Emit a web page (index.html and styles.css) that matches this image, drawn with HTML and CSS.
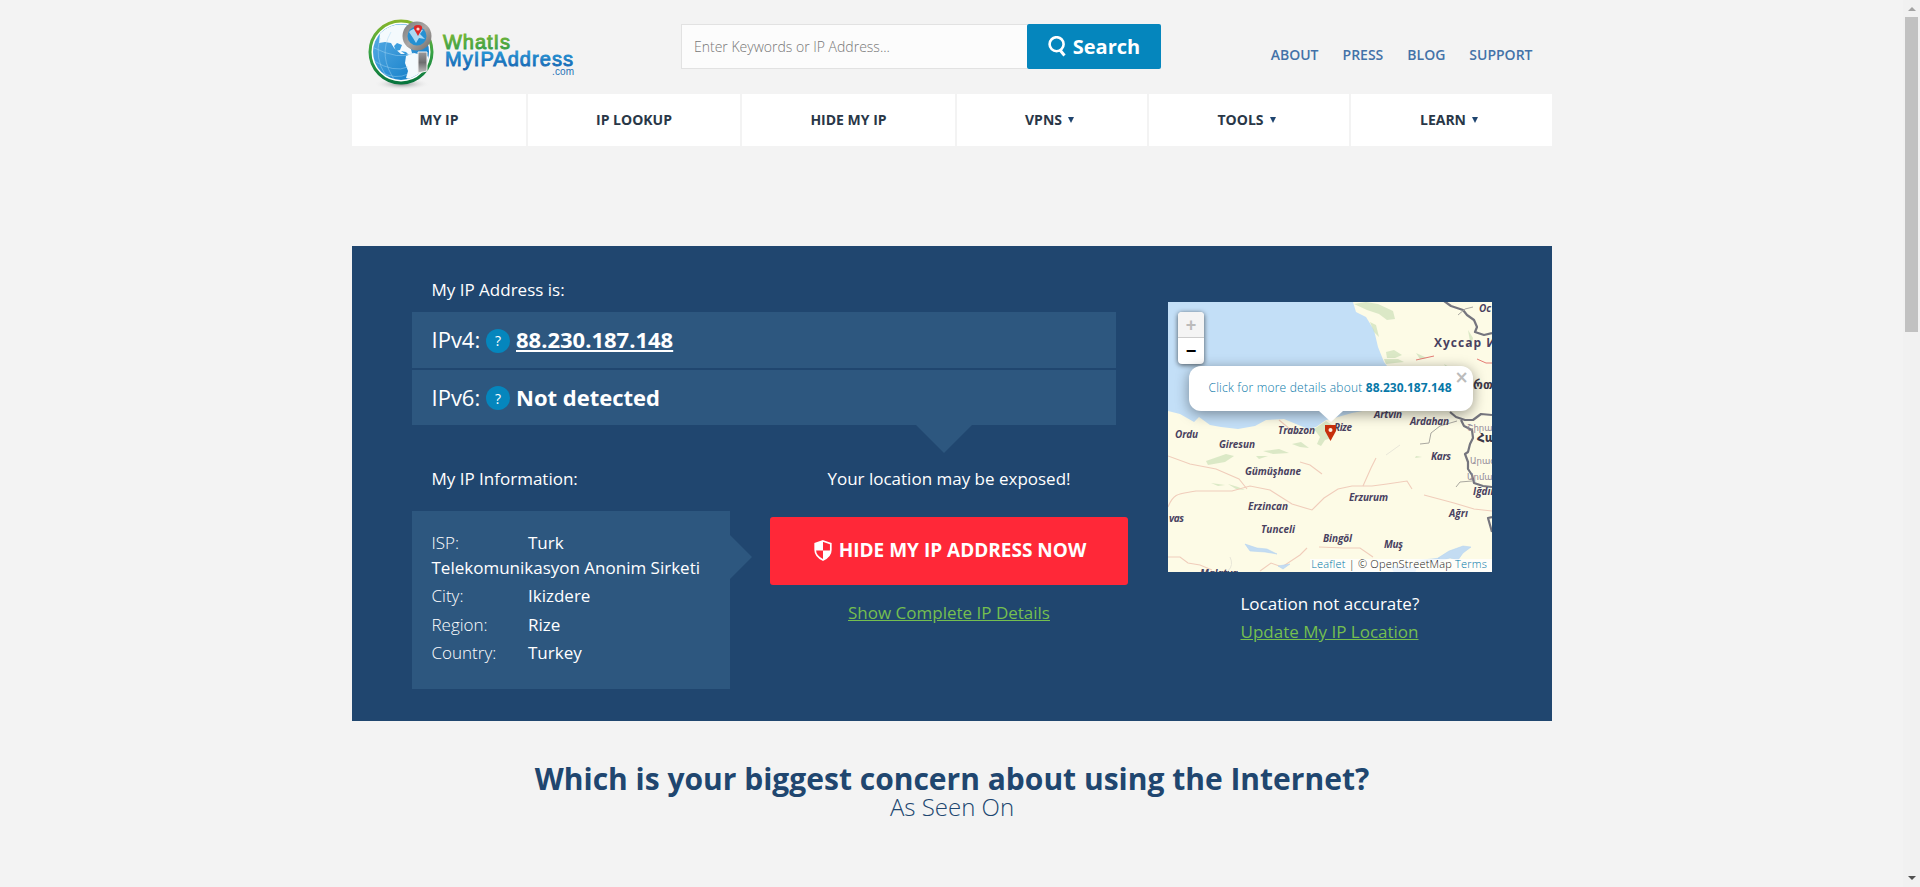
FILE: index.html
```html
<!DOCTYPE html>
<html lang="en">
<head>
<meta charset="utf-8">
<title>What Is My IP Address</title>
<link rel="stylesheet" href="styles.css">
</head>
<body>
<div class="window">
<div class="page">
  <header class="header">
    <svg class="logo" width="212" height="76" viewBox="0 0 212 76" role="img" aria-label="WhatIsMyIPAddress.com">
      <defs>
        <linearGradient id="ring" x1="0" y1="0" x2="0" y2="1"><stop offset="0" stop-color="#85b52b"/><stop offset=".5" stop-color="#38a344"/><stop offset="1" stop-color="#08753d"/></linearGradient>
        <linearGradient id="water" x1="0" y1="0" x2="1" y2="1"><stop offset="0" stop-color="#5eb0e8"/><stop offset="1" stop-color="#0a78c4"/></linearGradient>
        <linearGradient id="metal" x1="0" y1="0" x2="1" y2="1"><stop offset="0" stop-color="#77797b"/><stop offset=".5" stop-color="#aaa7a5"/><stop offset="1" stop-color="#6f6b69"/></linearGradient>
        <linearGradient id="handle" x1="0" y1="0" x2="0" y2="1"><stop offset="0" stop-color="#9a9a9b"/><stop offset=".5" stop-color="#6d6d6f"/><stop offset="1" stop-color="#c2c2c3"/></linearGradient>
        <linearGradient id="green" x1="0" y1="0" x2="0" y2="1"><stop offset="0" stop-color="#7fb92f"/><stop offset="1" stop-color="#2b9a4b"/></linearGradient>
        <linearGradient id="blue" x1="0" y1="0" x2="0" y2="1"><stop offset="0" stop-color="#29a0dc"/><stop offset="1" stop-color="#1260ae"/></linearGradient>
        <radialGradient id="shade"><stop offset="0" stop-color="#8b8d8e"/><stop offset="1" stop-color="#f3f3f3" stop-opacity="0"/></radialGradient>
        <clipPath id="ball"><circle cx="35" cy="36" r="28"/></clipPath>
      </defs>
      <ellipse cx="36" cy="68" rx="28" ry="6" fill="url(#shade)"/>
      <circle cx="35" cy="36" r="31" fill="#fff" stroke="url(#ring)" stroke-width="3"/>
      <circle cx="35" cy="36" r="28" fill="url(#water)"/>
      <g clip-path="url(#ball)">
        <path d="M14 17q14-12 29-7l6 8-6 8 3 11 7 2-1 3-6 0-6-4-5 0-7-6-3-5-6-1-6 1z" fill="#f4fafd"/>
        <path d="M31 27l5 2-2 5-4 1-2-5zM35 35l5 1 3 3-4-1z" fill="#3a9ddd"/>
        <path d="M40 40l8-3 16 4-2 16-13 8-9-3 2-7-3-8z" fill="#f4fafd"/>
        <g fill="none" stroke="#a5d6f3" stroke-width=".6" opacity=".75"><path d="M6 31q28 14 42 6M8 45q20 12 34 6M14 56q16 8 28 2M25 16q-14 24 5 50M14 22q-6 20 6 38"/></g>
      </g>
      <path d="M52 36h9v19l-9 2z" fill="url(#handle)" stroke="#f3f3f3"/>
      <circle cx="51" cy="20" r="14.500" fill="url(#metal)"/>
      <circle cx="51" cy="20" r="9.500" fill="#2590d2"/>
      <path d="M43 16q5-6 14-2l-3 4 5 5-6-1-3 5-3-5z" fill="#cfeafa" opacity=".8"/>
      <path d="M52 20l-4-7q-1-4 4-4t4 4z" fill="#db2828"/><circle cx="52" cy="13" r="1.600" fill="#ffd0c8"/>
      <text class="logo-word" x="77" y="33" textLength="67" fill="url(#green)" stroke="url(#green)">WhatIs</text>
      <text class="logo-word" x="79" y="50" textLength="128" fill="url(#blue)" stroke="url(#blue)">MyIPAddress</text>
      <text class="logo-com" x="186" y="58.500" textLength="22">.com</text>
    </svg>
    <form class="search">
      <input class="search-input" type="text" placeholder="Enter Keywords or IP Address..." aria-label="Search">
      <button class="search-button" type="button">
        <svg width="18" height="21" viewBox="0 0 18 21" fill="none" stroke="#fff"><circle cx="8.600" cy="8.200" r="7" stroke-width="2.600"/><path d="M11.500 13.500l5 6" stroke-width="3"/></svg>
        <span>Search</span>
      </button>
    </form>
    <nav class="links"><a>ABOUT</a><a>PRESS</a><a>BLOG</a><a>SUPPORT</a></nav>
  </header>

  <nav class="menu">
    <a>MY IP</a><a>IP LOOKUP</a><a>HIDE MY IP</a>
    <a>VPNS<i class="caret"></i></a><a>TOOLS<i class="caret"></i></a><a>LEARN<i class="caret"></i></a>
  </nav>

  <main class="hero">
    <section class="details">
      <h2 class="label">My IP Address is:</h2>
      <div class="ips">
        <div class="ip"><span class="ip-kind">IPv4:</span><span class="help">?</span><a class="ip-value underlined">88.230.187.148</a></div>
        <div class="ip"><span class="ip-kind">IPv6:</span><span class="help">?</span><span class="ip-value">Not detected</span></div>
      </div>
      <div class="lower">
        <div class="info">
          <h2 class="label info-label">My IP Information:</h2>
          <div class="info-box">
            <p><span class="key">ISP:</span><span class="val">Turk<br>Telekomunikasyon Anonim Sirketi</span></p>
            <p><span class="key">City:</span><span class="val">Ikizdere</span></p>
            <p><span class="key">Region:</span><span class="val">Rize</span></p>
            <p><span class="key">Country:</span><span class="val">Turkey</span></p>
          </div>
        </div>
        <div class="action">
          <p class="exposed">Your location may be exposed!</p>
          <a class="hide-button">
            <svg width="18" height="21" viewBox="0 0 18 21"><path d="M9 1l7.800 2.700V10c0 5-4.300 8.300-7.800 10C5.500 18.300 1.200 15 1.200 10V3.700z" fill="none" stroke="#fff" stroke-width="1.700"/><path d="M9 1v9.500H1V3.700zM9 10.500h8c-.4 4.500-4.500 8-8 9.500z" fill="#fff"/></svg>
            <span>HIDE MY IP ADDRESS NOW</span>
          </a>
          <a class="green-link">Show Complete IP Details</a>
        </div>
      </div>
    </section>

    <section class="location">
      <div class="map">
        <svg class="map-art" width="324" height="270" viewBox="0 0 324 270">
          <rect width="324" height="270" fill="#fdfbe6"/>
          <path d="M0 0H185L188 10 198 15 206 28 210 45 216 60 225 72 226 90 205 107 184 111 170 115 158 118 148 125 140 127 128 122 116 117 98 118 87 124 70 127 53 125 42 123 31 115 26 120 12 112 0 109z" fill="#c3dff7"/>
          <g fill="#c9dfb6" opacity=".65">
            <path d="M186 2l12-2 12 2 15 7 2 8-8 1-8-6-12-4zM202 20l6 3 3 12-5-5zM218 50l8-2 8 5-7 3-8 0zM216 57h14l6 3-18 2z"/>
            <path d="M146 127l12-8 6 4-4 8 4 5-7 2-4 6-4-2 3-7zM38 159l20-7 8 2-9 6-17 3zM95 149l16-2 10 4-16 1zM124 142l9-2 8 6-9-1zM60 182l10 3 7 3-9-1zM43 181l14 2-7 1zM88 154h12l-9 3z"/>
            <path d="M248 51l11 5-7 1zM276 62l12 7-8 0zM300 28l5 8-2 9zM248 154l6 1-7 1zM125 126l8 5-2 1z"/>
          </g>
          <g fill="none" stroke="#f0cdbb" stroke-width="1.100">
            <path d="M0 205C6 190 12 192 28 189L64 189 82 184 102 188 124 202 144 208 156 196 170 187 184 184 204 184 219 182 239 179 244 187"/>
            <path d="M0 154L22 162 48 167 71 177 79 187M195 184L203 166 208 156M256 193L286 201 306 207 324 209M132 160l10 3 12 9M111 118l17 14"/>
            <path d="M0 255h12l8 6 12 2 12 5M92 269l11-8 11 4 18-12 7-7M151 245l25 1 16 0 13 9"/>
          </g>
          <path d="M248 58l18-4M309 57l9 4 6 0" stroke="#e57d75" fill="none"/>
          <path d="M218 153l14-10M62 255q4 8-2 14" stroke="#e9e7d9" fill="none"/>
          <g fill="#c3dcf2" stroke="#b1d1f0" stroke-width=".5"><path d="M77 242l12 4 10 1 10 5-12-2-15-1z"/><path d="M270 256l11-7 14-5 8 1-8 6-5 7-8-2-10 3zM247 259l25-3-8 4zM223 264l26 1-2 5h-21zM110 264l12-2-7 5z"/></g>
          <g fill="none" stroke="#75757e" stroke-width="2.200" stroke-linejoin="round">
            <path d="M276-1l7 5 12 4 4 5 7 5 3 7-2 5 9 3 8-2M282 110l6 5 9 3 8 0 8-6 11 1M293 118l3 6 8 4 1 8-3 6-2 8-3 2 3 8 0 7 4 6 2 8 9 3 9 1M324 215l-4 1 4 14"/>
          </g>
          <path d="M252 142l9-1 2-10 9-7 17-5M288 185l4-5 12-1M290 13l7-6 8-2" fill="none" stroke="#aaa8a0"/>
          <g class="place">
            <text x="7" y="136" textLength="23">Ordu</text><text x="51" y="146" textLength="36">Giresun</text><text x="110" y="132" textLength="37">Trabzon</text><text x="166" y="129" textLength="18">Rize</text><text x="206" y="116" textLength="28">Artvin</text><text x="242" y="123" textLength="39">Ardahan</text><text x="77" y="173" textLength="56">Gümüşhane</text><text x="263" y="158" textLength="20">Kars</text><text x="181" y="199" textLength="39">Erzurum</text><text x="80" y="208" textLength="40">Erzincan</text><text x="1" y="220" textLength="15">vas</text><text x="93" y="231" textLength="34">Tunceli</text><text x="155" y="240" textLength="29">Bingöl</text><text x="216" y="246" textLength="19">Muş</text><text x="281" y="215" textLength="19">Ağrı</text><text x="305" y="193">Iğdır</text><text x="32" y="275" textLength="38">Malatya</text>
            <text x="311" y="10">Ос</text>
          </g>
          <text class="region" x="266" y="45">Хуссар И</text>
          <g class="caucasus"><text x="305" y="87">რთ</text><text x="309" y="140">Հա</text></g>
          <g class="province"><text x="299" y="129">Շիրակ</text><text x="302" y="162">Արագ</text><text x="299" y="178">Արմավ</text></g>
        </svg>
        <div class="zoom"><span class="zoom-in">+</span><span class="zoom-out">−</span></div>
        <div class="popup"><span class="popup-text">Click for more details about <b>88.230.187.148</b></span><span class="close">×</span></div>
        <svg class="pin" width="11" height="16" viewBox="0 0 11 16"><path d="M0 0h11v6L5.500 16 0 6z" fill="#c7300c"/><circle cx="5.500" cy="5" r="2" fill="#fbf0e3"/></svg>
        <div class="credit"><a>Leaflet</a> | © OpenStreetMap <a>Terms</a></div>
      </div>
      <div class="accuracy"><p>Location not accurate?</p><a class="green-link update">Update My IP Location</a></div>
    </section>
  </main>

  <section class="concern">
    <h1>Which is your biggest concern about using the Internet?</h1>
    <p>As Seen On</p>
  </section>
</div>
<div class="scrollbar"><i class="arrow-up"></i><i class="thumb"></i><i class="arrow-down"></i></div>
</div>
</body>
</html>
```
FILE: styles.css
```css
* { box-sizing: border-box; }
body { margin: 0; background: #f3f3f3; font-family: "Open Sans", sans-serif; color: #fff; }
h1, h2, p { margin: 0; font-weight: 400; }
.window { display: flex; height: 887px; overflow: hidden; }
.page { flex: 1; padding-left: 352px; }

.header { display: flex; width: 1200px; height: 94px; }
.logo { margin: 16px 0 0 14px; flex: none; }
.logo-word { font: 20px "Liberation Sans", sans-serif; stroke-width: .9; }
.logo-com { font: 10px "Liberation Sans", sans-serif; fill: #2871b4; }
.search { display: flex; margin: 24px 0 0 103px; width: 480px; height: 45px; }
.search-input { width: 346px; height: 45px; padding: 0 0 1px 12px; border: 1px solid #e2e2e2; border-right: 0; background: #fcfcfc; font: 300 14px "Open Sans", sans-serif; }
.search-input::placeholder { color: #777; opacity: 1; }
.search-button { display: flex; align-items: center; justify-content: center; gap: 7px; width: 134px; border: 0; border-radius: 2px; background: #0586bd; color: #fff; font: 700 20px "Open Sans", sans-serif; padding: 0; }
.links { display: flex; gap: 24px; margin: 45px 0 0 auto; padding-right: 19.500px; color: #4372a8; font-size: 14px; font-weight: 600; line-height: 20px; }

.menu { display: grid; grid-template-columns: 174px 212px 213px 190px 200px 201px; gap: 2px; width: 1200px; height: 52px; }
.menu a { display: flex; align-items: center; justify-content: center; padding-bottom: 2px; background: #fff; color: #293747; font-size: 14px; font-weight: 700; }
.caret { margin: 2px 5px 0 6px; border: 3px solid transparent; border-top: 6px solid #1f4570; border-bottom: 0; }

.hero { display: flex; width: 1200px; height: 475px; margin-top: 100px; padding-left: 60px; background: #20466f; }
.details { width: 756px; }
.label { margin: 32px 0 0 19.500px; font-size: 17px; line-height: 24px; }
.ips { position: relative; display: grid; gap: 2px; width: 704px; margin-top: 10px; }
.ips::after { content: ""; position: absolute; left: 504px; top: 113px; border: 28px solid transparent; border-top-color: #2d577f; border-bottom: 0; }
.ip { display: flex; align-items: center; height: 55.500px; padding: 0 0 1px 19.500px; background: #2d577f; font-size: 22px; }
.ip-kind { width: 54.500px; }
.help { display: grid; place-items: center; width: 24px; height: 24px; margin: 3px 6px 0 0; border-radius: 50%; background: #0586bd; font-size: 14px; }
.ip-value { font-weight: 700; }
.underlined { text-decoration: underline; text-decoration-thickness: 2px; text-underline-offset: 2px; }
.lower { display: flex; }
.info { width: 318px; }
.info-label { margin-top: 42px; }
.info-box { position: relative; height: 178px; margin-top: 20px; padding: 19px 0 0 19.500px; background: #2d577f; font-size: 17px; line-height: 25px; }
.info-box::after { content: ""; position: absolute; left: 318px; top: 24px; border: 22px solid transparent; border-left-color: #2d577f; border-right: 0; }
.info-box p { margin-bottom: 3.300px; }
.key { display: inline-block; width: 96.500px; font-weight: 300; }
.val { font-weight: 500; font-variation-settings: "wght" 450; }
.action { display: flex; flex-direction: column; align-items: center; width: 358px; margin: 42px 0 0 40px; }
.exposed { font-size: 17px; line-height: 24px; }
.hide-button { display: flex; align-items: center; justify-content: center; gap: 7px; width: 358px; height: 68px; margin-top: 26px; padding: 0 0 2px 2px; border-radius: 3px; background: #ff2838; font-size: 19px; font-weight: 700; white-space: nowrap; }
.green-link { color: #75bf4f; font-size: 17px; line-height: 24px; text-decoration: underline; }
.hide-button + .green-link { margin-top: 16px; }

.location { width: 324px; padding-top: 56px; }
.map { position: relative; width: 324px; height: 270px; overflow: hidden; }
.map-art { display: block; }
.place { font: italic 700 10px "Open Sans", "Noto Sans", sans-serif; fill: #49415f; }
.region { font: 700 12px "Open Sans", sans-serif; fill: #49415f; letter-spacing: 1px; }
.caucasus { font: 700 12px "DejaVu Sans", sans-serif; fill: #3d3948; }
.province { font: 8.500px "DejaVu Sans", sans-serif; fill: #918998; }
.zoom { position: absolute; left: 10px; top: 10px; width: 26px; height: 52px; border-radius: 4px; background: #fff; box-shadow: 0 1px 5px rgba(0, 0, 0, .65); color: #000; font: 700 18px/26px "Liberation Sans", sans-serif; text-align: center; }
.zoom span { display: block; height: 26px; }
.zoom .zoom-in { border-bottom: 1px solid #ccc; border-radius: 4px 4px 0 0; background: #f4f4f4; color: #bbb; }
.popup { position: absolute; left: 21px; top: 64px; width: 284px; height: 45px; padding: 13px 0 0 19.500px; border-radius: 12px; background: #fff; box-shadow: 0 3px 14px rgba(0, 0, 0, .4); color: #0778a8; font-size: 12px; font-weight: 300; line-height: 18px; letter-spacing: .22px; white-space: nowrap; }
.popup b { font-weight: 700; letter-spacing: 0; }
.popup::after { content: ""; position: absolute; left: 130px; top: 45px; border: 12px solid transparent; border-top: 11px solid #fff; border-bottom: 0; }
.close { position: absolute; right: 4px; top: 2px; color: #bbb; font: 700 17px/18px "DejaVu Sans", sans-serif; }
.pin { position: absolute; left: 156.500px; top: 123px; }
.credit { position: absolute; right: 0; bottom: 0; height: 13px; width: 182px; padding-right: 5px; background: rgba(255, 255, 255, .75); color: #222; font-size: 11px; font-weight: 300; line-height: 10px; letter-spacing: .2px; text-align: right; white-space: nowrap; }
.credit a { color: #0078a8; }
.accuracy { margin: 20px 0 0 72.500px; font-size: 17px; line-height: 24px; }
.update { display: block; margin-top: 4px; }

.concern { width: 1200px; margin-top: 37px; color: #20466f; text-align: center; }
.concern h1 { font-size: 30px; line-height: 42px; font-weight: 700; }
.concern p { font-size: 24px; line-height: 14px; font-weight: 300; }

.scrollbar { display: flex; flex-direction: column; align-items: center; width: 17px; background: #f1f1f1; }
.arrow-up { margin-top: 7px; border: 4px solid transparent; border-top: 0; border-bottom: 4px solid #a3a3a3; }
.thumb { width: 13px; height: 315px; margin-top: 6px; background: #c1c1c1; }
.arrow-down { margin: auto 0 7px; border: 4px solid transparent; border-bottom: 0; border-top: 4px solid #505050; }
```
